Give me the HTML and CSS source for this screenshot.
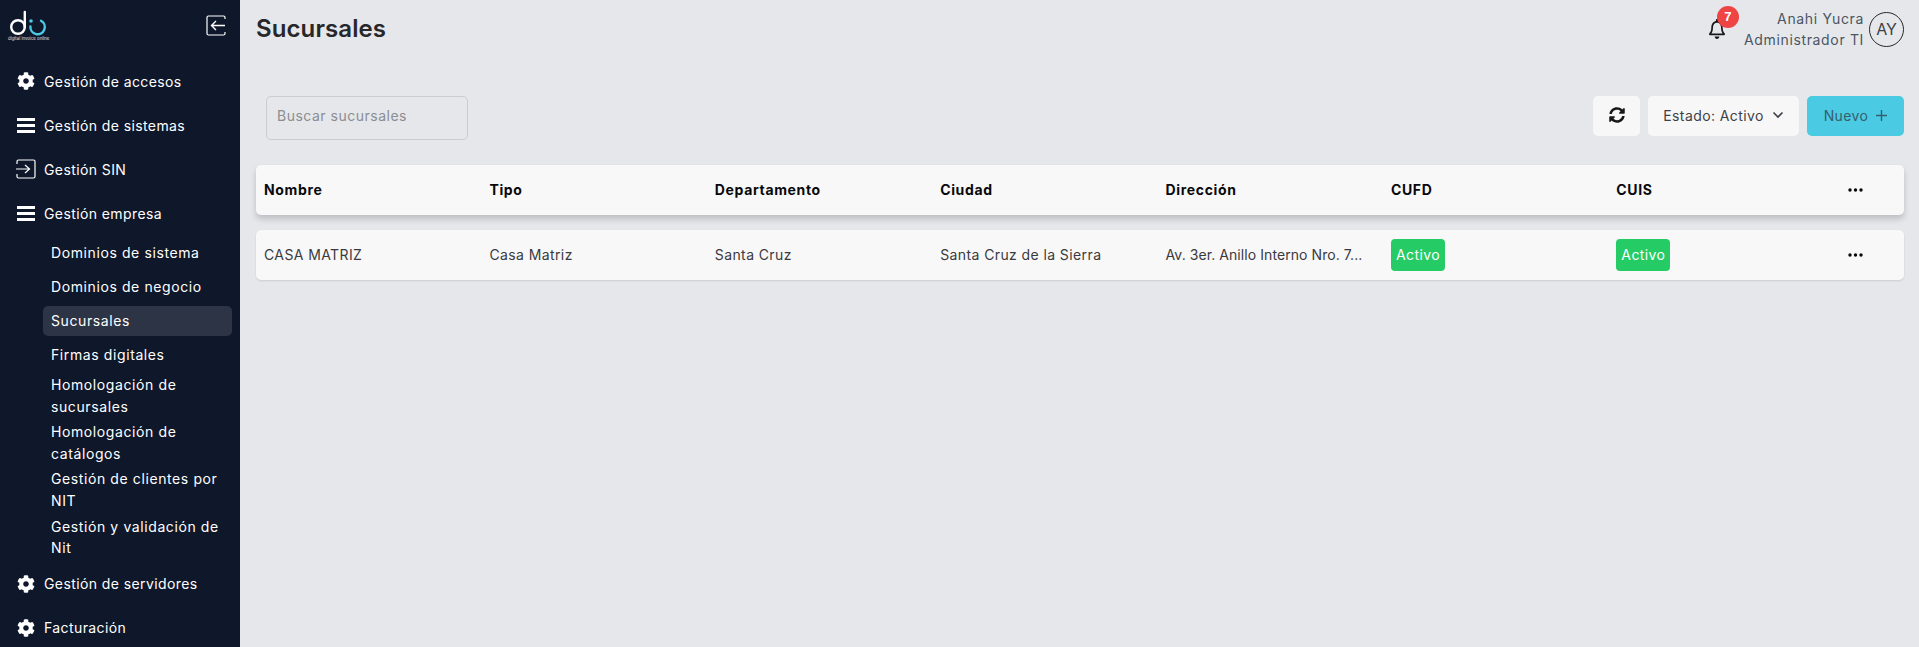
FILE: index.html
```html
<!DOCTYPE html>
<html lang="es">
<head>
    <meta charset="UTF-8">
    <meta name="viewport" content="width=device-width, initial-scale=1.0">
    <title>Sucursales</title>
    <link rel="stylesheet" href="styles.css">
</head>
<body>
    <svg class="sprites" aria-hidden="true">
        <symbol id="i-cog" viewBox="0 0 512 512"><path fill="currentColor" d="M487.4 315.7l-42.6-24.6c4.3-23.2 4.3-47 0-70.2l42.6-24.6c4.9-2.8 7.1-8.6 5.5-14-11.1-35.6-30-67.8-54.7-94.6-3.8-4.1-10-5.1-14.8-2.3L380.8 110c-17.9-15.4-38.5-27.3-60.8-35.1V25.8c0-5.6-3.9-10.5-9.4-11.7-36.7-8.2-74.3-7.8-109.2 0-5.5 1.2-9.4 6.1-9.4 11.7V75c-22.2 7.9-42.8 19.8-60.8 35.1L88.7 85.5c-4.9-2.8-11-1.9-14.8 2.3-24.7 26.7-43.6 58.9-54.7 94.6-1.7 5.4.6 11.2 5.5 14L67.3 221c-4.3 23.2-4.3 47 0 70.2l-42.6 24.6c-4.9 2.8-7.1 8.6-5.5 14 11.1 35.6 30 67.8 54.7 94.6 3.8 4.1 10 5.1 14.8 2.3l42.6-24.6c17.9 15.4 38.5 27.3 60.8 35.1v49.2c0 5.6 3.9 10.5 9.4 11.7 36.7 8.2 74.3 7.8 109.2 0 5.5-1.2 9.4-6.1 9.4-11.7v-49.2c22.2-7.9 42.8-19.8 60.8-35.1l42.6 24.6c4.9 2.8 11 1.9 14.8-2.3 24.7-26.7 43.6-58.9 54.7-94.6 1.5-5.5-.7-11.3-5.6-14.1zM256 336c-44.1 0-80-35.9-80-80s35.9-80 80-80 80 35.9 80 80-35.9 80-80 80z"/></symbol>
        <symbol id="i-bars" viewBox="0 0 18 15"><path fill="currentColor" d="M0 0h18v3H0zM0 6h18v3H0zM0 12h18v3H0z"/></symbol>
        <symbol id="i-dots" viewBox="0 0 15 4"><circle cx="2" cy="2" r="1.700" fill="currentColor"/><circle cx="7.500" cy="2" r="1.700" fill="currentColor"/><circle cx="13" cy="2" r="1.700" fill="currentColor"/></symbol>
    </svg>

    <aside class="sidebar">
        <div class="sidebar-top">
            <div class="logo">
                <svg width="40" height="26" viewBox="0 0 40 26" fill="none" stroke-width="2.400">
                    <circle cx="10" cy="17" r="6.800" stroke="#fff"/>
                    <path d="M16.800 17V2" stroke="#fff" stroke-linecap="round"/>
                    <circle cx="23" cy="11" r="1.800" fill="#4bcae3"/>
                    <path d="M22.400 16.500A7.200 7.200 0 1 0 33 10.700" stroke="#4bcae3" stroke-linecap="round"/>
                </svg>
                <span class="logo-text">digital invoice online</span>
            </div>
            <svg class="collapse" width="20" height="21" viewBox="0 0 20 21" fill="none" stroke="#fff" stroke-width="1.200">
                <path d="M19 4V2.500A1.500 1.500 0 0 0 17.500 1H2.500A1.500 1.500 0 0 0 1 2.500v16A1.500 1.500 0 0 0 2.500 20h15a1.500 1.500 0 0 0 1.500-1.500V17"/>
                <path d="M19 10.500H6M10 6l-4.500 4.500L10 15" stroke-width="1.400"/>
            </svg>
        </div>
        <nav class="menu">
            <a class="menu-item"><svg class="menu-icon"><use href="#i-cog"/></svg>Gestión de accesos</a>
            <a class="menu-item"><svg class="menu-icon menu-bars"><use href="#i-bars"/></svg>Gestión de sistemas</a>
            <a class="menu-item">
                <svg class="menu-icon login" viewBox="0 0 20 20" fill="none" stroke="currentColor" stroke-width="1.200"><path d="M1 5V2.500A1.500 1.500 0 0 1 2.500 1h15A1.500 1.500 0 0 1 19 2.500v15a1.500 1.500 0 0 1-1.500 1.500h-15A1.500 1.500 0 0 1 1 17.500V15"/><path d="M0 10h13M9 6l4.500 4L9 14"/></svg>
                Gestión SIN
            </a>
            <a class="menu-item"><svg class="menu-icon menu-bars"><use href="#i-bars"/></svg>Gestión empresa</a>
            <div class="submenu">
                <a class="sub-item">Dominios de sistema</a>
                <a class="sub-item">Dominios de negocio</a>
                <a class="sub-item active">Sucursales</a>
                <a class="sub-item">Firmas digitales</a>
                <a class="sub-item">Homologación de sucursales</a>
                <a class="sub-item">Homologación de catálogos</a>
                <a class="sub-item">Gestión de clientes por NIT</a>
                <a class="sub-item">Gestión y validación de Nit</a>
            </div>
            <a class="menu-item"><svg class="menu-icon"><use href="#i-cog"/></svg>Gestión de servidores</a>
            <a class="menu-item"><svg class="menu-icon"><use href="#i-cog"/></svg>Facturación</a>
        </nav>
    </aside>

    <main class="content">
        <header class="topbar">
            <h1>Sucursales</h1>
            <div class="user-area">
                <div class="bell">
                    <svg width="16" height="20" viewBox="0 0 448 512" preserveAspectRatio="none"><path fill="currentColor" d="M224 512c35.300 0 64-28.700 64-64H160c0 35.300 28.700 64 64 64zM439.400 362.300c-19.300-20.800-55.500-52-55.500-154.300 0-77.700-54.500-139.900-127.900-155.200V32c0-17.700-14.300-32-32-32s-32 14.300-32 32v20.800C118.600 68.100 64.100 130.300 64.100 208c0 102.300-36.200 133.500-55.500 154.300-6 6.400-8.700 14.100-8.600 21.700.1 16.400 13 32 32.100 32h383.800c19.100 0 32-15.600 32.100-32 .1-7.600-2.600-15.300-8.600-21.700zM67.500 368c21.200-28 44.400-74.300 44.500-159.400 0-.2-.1-.4-.1-.6 0-61.900 50.100-112 112-112s112 50.100 112 112c0 .2-.1.400-.1.600.1 85.100 23.300 131.500 44.500 159.400H67.500z"/></svg>
                    <span class="bell-count">7</span>
                </div>
                <div class="user-name">
                    <span>Anahi Yucra</span>
                    <span>Administrador TI</span>
                </div>
                <div class="avatar">AY</div>
            </div>
        </header>

        <div class="toolbar">
            <input class="search" type="text" placeholder="Buscar sucursales">
            <div class="actions">
                <button class="btn btn-icon">
                    <svg width="16" height="16" viewBox="0 0 512 512"><path fill="currentColor" d="M370.720 133.280C339.458 104.008 298.888 87.962 255.848 88c-77.458.068-144.328 53.178-162.791 126.850-1.344 5.363-6.122 9.150-11.651 9.150H24.103c-7.498 0-13.194-6.807-11.807-14.176C33.933 94.924 134.813 8 256 8c66.448 0 126.791 26.136 171.315 68.685L463.030 40.970C478.149 25.851 504 36.559 504 57.941V192c0 13.255-10.745 24-24 24H345.941c-21.382 0-32.090-25.851-16.971-40.971l41.750-41.749zM32 296h134.059c21.382 0 32.090 25.851 16.971 40.971l-41.750 41.750c31.262 29.273 71.835 45.319 114.876 45.280 77.418-.07 144.315-53.144 162.787-126.849 1.344-5.363 6.122-9.150 11.651-9.150h57.304c7.498 0 13.194 6.807 11.807 14.176C478.067 417.076 377.187 504 256 504c-66.448 0-126.791-26.136-171.315-68.685L48.970 471.030C33.851 486.149 8 475.441 8 454.059V320c0-13.255 10.745-24 24-24z"/></svg>
                </button>
                <button class="btn btn-state">Estado: Activo
                    <svg width="12" height="8" viewBox="0 0 12 8" fill="none" stroke="currentColor" stroke-width="1.600"><path d="M1.500 1.500L6 6l4.500-4.500"/></svg>
                </button>
                <button class="btn btn-new">Nuevo
                    <svg width="11" height="11" viewBox="0 0 11 11" fill="none" stroke="currentColor" stroke-width="1.400"><path d="M5.500 0v11M0 5.500h11"/></svg>
                </button>
            </div>
        </div>

        <div class="table-row table-head">
            <div>Nombre</div>
            <div>Tipo</div>
            <div>Departamento</div>
            <div>Ciudad</div>
            <div>Dirección</div>
            <div>CUFD</div>
            <div>CUIS</div>
            <div><svg class="dots"><use href="#i-dots"/></svg></div>
        </div>
        <div class="table-row">
            <div>CASA MATRIZ</div>
            <div>Casa Matriz</div>
            <div>Santa Cruz</div>
            <div>Santa Cruz de la Sierra</div>
            <div class="cut">Av. 3er. Anillo Interno Nro. 7...</div>
            <div><span class="badge">Activo</span></div>
            <div><span class="badge">Activo</span></div>
            <div><svg class="dots"><use href="#i-dots"/></svg></div>
        </div>
    </main>
</body>
</html>
```

FILE: styles.css
```css
* {
    box-sizing: border-box;
}

body {
    font-family: Inter, "Open Sans", sans-serif;
    font-size: 14px;
    letter-spacing: 0.4px;
    margin: 0;
    height: 100vh;
    overflow: hidden;
    display: flex;
    background-color: #e5e7eb;
    color: #27272a;
}

.sprites {
    display: none;
}

/* sidebar */
.sidebar {
    width: 240px;
    flex-shrink: 0;
    background-color: #0f172a;
    color: #fff;
    overflow: hidden;
}

.sidebar-top {
    height: 59px;
    display: flex;
    justify-content: space-between;
    padding: 10px 14px 0 8px;
}

.logo {
    display: flex;
    flex-direction: column;
    align-items: flex-start;
    width: 40px;
}

.logo-text {
    font-size: 4.300px;
    letter-spacing: 0;
    white-space: nowrap;
    color: #e2e4e8;
    line-height: 6px;
}

.collapse {
    margin-top: 5px;
}

.menu-item {
    height: 44px;
    display: flex;
    align-items: center;
    gap: 9px;
    padding-left: 17px;
}

.menu-icon {
    width: 18px;
    height: 18px;
    flex-shrink: 0;
}

.menu-bars {
    height: 15px;
}

.login {
    width: 20px;
    height: 20px;
    margin-left: -1px;
    margin-right: -1px;
}

.submenu {
    display: flex;
    flex-direction: column;
    gap: 4px;
    padding: 3px 8px 3px 43px;
}

.sub-item {
    display: flex;
    align-items: center;
    padding: 0 8px;
    min-height: 30px;
    line-height: 21.600px;
    letter-spacing: 0.6px;
    border-radius: 5px;
}

.sub-item.active {
    background-color: #2d3446;
}

/* contenido */
.content {
    flex: 1;
    min-width: 0;
    padding: 0 15px 0 16px;
}

.topbar {
    height: 58px;
    display: flex;
    justify-content: space-between;
    align-items: center;
}

.topbar h1 {
    font-size: 24px;
    font-weight: 600;
    letter-spacing: 0.1px;
    margin: 0 0 2px;
}

.user-area {
    display: flex;
    align-items: center;
}

.bell {
    position: relative;
    margin-right: 19px;
    height: 20px;
    color: #18181b;
}

.bell-count {
    position: absolute;
    left: 8px;
    top: -13px;
    width: 22px;
    height: 22px;
    border-radius: 50%;
    background-color: #ef4444;
    color: #fff;
    font-family: "Liberation Sans", sans-serif;
    font-size: 13px;
    font-weight: 700;
    letter-spacing: 0;
    text-align: center;
    line-height: 22px;
}

.user-name {
    display: flex;
    flex-direction: column;
    align-items: flex-end;
    line-height: 21px;
    letter-spacing: 0.65px;
    color: #4b5563;
    margin-right: 5px;
}

.avatar {
    width: 35px;
    height: 35px;
    border: 1px solid #27272a;
    border-radius: 50%;
    display: flex;
    align-items: center;
    justify-content: center;
    font-size: 16px;
    letter-spacing: 0;
    color: #3f3f46;
}

.toolbar {
    margin-top: 38px;
    height: 69px;
    display: flex;
    justify-content: space-between;
    align-items: flex-start;
    padding-left: 10px;
}

.search {
    width: 202px;
    height: 44px;
    padding: 0 10px 6px;
    border: 1px solid #cbccd0;
    border-radius: 5px;
    background: transparent;
    font: inherit;
    letter-spacing: 0.5px;
}

.search::placeholder {
    color: #8b8d92;
}

.actions {
    display: flex;
    gap: 8px;
}

.btn {
    height: 40px;
    padding: 0 0 2px;
    border: none;
    border-radius: 5px;
    background-color: #f7f7f7;
    color: #3f3f46;
    font: inherit;
    letter-spacing: inherit;
    display: flex;
    align-items: center;
    justify-content: center;
    gap: 8px;
}

.btn-icon {
    width: 47px;
    color: #18181b;
}

.btn-state {
    width: 151px;
}

.btn-new {
    width: 97px;
    background-color: #4bcae3;
    color: #33606c;
}

.table-row {
    display: grid;
    grid-template-columns: repeat(7, 225.400px) 1fr;
    align-items: center;
    height: 50px;
    padding: 0 0 2px 8px;
    margin-bottom: 15px;
    background-color: #f8f8f8;
    border-radius: 5px;
    box-shadow: 0 1px 2px rgba(0, 0, 0, 0.12);
    color: #3a3a40;
}

.table-head {
    font-weight: 700;
    letter-spacing: 0.65px;
    color: #09090b;
    box-shadow: 0 4px 6px rgba(0, 0, 0, 0.18);
}

.cut {
    white-space: nowrap;
    letter-spacing: 0.07px;
}

.badge {
    display: inline-block;
    height: 32px;
    margin-top: 2px;
    line-height: 32px;
    padding: 0 5px;
    border-radius: 4px;
    background-color: #25cb64;
    color: #fff;
    vertical-align: middle;
}

.dots {
    display: block;
    width: 15px;
    height: 4px;
    margin: 2px 0 0 6px;
    color: #09090b;
}
```
